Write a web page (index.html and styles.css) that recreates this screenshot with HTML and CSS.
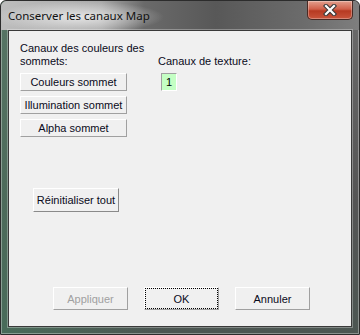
FILE: index.html
```html
<!DOCTYPE html>
<html lang="fr">
<head>
    <meta charset="UTF-8">
    <title>Conserver les canaux Map</title>
    <link rel="stylesheet" href="styles.css">
</head>
<body>
    <div class="window">
        <div class="titlebar">
            <span class="title">Conserver les canaux Map</span>
            <div class="close">
                <svg width="14" height="12" viewBox="0 0 14 12">
                    <path d="M3 2 L11 10 M11 2 L3 10" stroke="#3a3a3a" stroke-width="4.4" stroke-linecap="square"/>
                    <path d="M3 2 L11 10 M11 2 L3 10" stroke="#fff" stroke-width="2.2" stroke-linecap="square"/>
                </svg>
            </div>
        </div>

        <div class="client">
            <div class="top">
                <div class="vertex-col">
                    <p class="label">Canaux des couleurs des<br>sommets:</p>
                    <button class="btn wide">Couleurs sommet</button>
                    <button class="btn wide">Illumination sommet</button>
                    <button class="btn wide">Alpha sommet</button>
                </div>
                <div class="texture-col">
                    <p class="label">Canaux de texture:</p>
                    <div class="channel">1</div>
                </div>
            </div>

            <button class="btn reset">Réinitialiser tout</button>

            <!-- Dialog buttons -->
            <div class="footer">
                <button class="btn action" disabled>Appliquer</button>
                <button class="btn action focused">OK</button>
                <button class="btn action">Annuler</button>
            </div>
        </div>
    </div>
</body>
</html>
```

FILE: styles.css
```css
body {
    margin: 0;
    padding: 0;
    background-color: #fff;
}

.window {
    width: 360px;
    height: 335px;
    box-sizing: border-box;
    display: flex;
    flex-direction: column;
    padding: 0 7px 7px 7px;
    border: 1px solid #2c2c2c;
    border-radius: 6px 6px 0 0;
    box-shadow: inset 0 0 0 1px rgba(255, 255, 255, 0.35);
    background:
        linear-gradient(to right, rgba(70, 125, 95, 0.55), rgba(70, 125, 95, 0) 45%),
        linear-gradient(to bottom, #6c6c6c, #555 60%, #4c5652);
}

.titlebar {
    height: 29px;
    margin: 0 -7px;
    padding: 0 6px 0 7px;
    display: flex;
    align-items: flex-start;
    border-radius: 6px 6px 0 0;
    background:
        radial-gradient(ellipse 85px 16px at 78px 16px, rgba(235, 235, 235, 0.9), rgba(235, 235, 235, 0) 100%),
        linear-gradient(to right, #bdbdbd 0%, #a9a9a9 28%, #6a6a6a 40%, #585858 60%, #6c6c6c 85%, #7e7e7e 100%);
}

.title {
    font-family: "Noto Sans", sans-serif;
    font-size: 11.5px;
    color: #111;
    line-height: 16px;
    margin-top: 7px;
}

.close {
    margin-left: auto;
    width: 46px;
    height: 19px;
    box-sizing: border-box;
    display: flex;
    align-items: center;
    justify-content: center;
    border: 1px solid #4a2a24;
    border-top: none;
    border-radius: 0 0 5px 5px;
    background: linear-gradient(to bottom, #e3a08e 0%, #d0604a 45%, #b73a22 55%, #c9553c 100%);
    box-shadow: inset 0 0 0 1px rgba(255, 255, 255, 0.3);
}

.client {
    flex: 1;
    display: flex;
    flex-direction: column;
    background-color: #f0f0f0;
    border: 1px solid #3a3a3a;
    box-shadow: 0 0 0 1px rgba(255, 255, 255, 0.3);
    padding: 11px 0 16px 11px;
    font-family: "Liberation Sans", Arial, sans-serif;
    font-size: 11px;
    color: #000;
}

.top {
    display: flex;
}

.vertex-col {
    display: flex;
    flex-direction: column;
    gap: 5px;
    width: 138px;
}

.label {
    margin: 0;
    line-height: 13px;
    color: #0a0a1a;
}

.texture-col {
    padding-top: 13px;
    display: flex;
    flex-direction: column;
    gap: 5px;
}

.channel {
    width: 16px;
    height: 18px;
    box-sizing: border-box;
    margin-left: 3px;
    background-color: #c4ffc4;
    border: 1px solid;
    border-color: #a0a0a0 #fff #fff #a0a0a0;
    text-align: center;
    line-height: 16px;
}

.btn {
    font-family: "Liberation Sans", Arial, sans-serif;
    font-size: 11px;
    color: #0a0a1a;
    background-color: #f0f0f0;
    border: 1px solid;
    border-color: #fff #a0a0a0 #a0a0a0 #fff;
    padding: 0;
    margin: 0;
    box-sizing: border-box;
}

.wide {
    width: 107px;
    height: 18px;
}

.reset {
    width: 86px;
    height: 24px;
    margin: 51px 0 0 13px;
    align-self: flex-start;
    border-right-color: #8a8a8a;
    border-bottom-color: #8a8a8a;
}

.footer {
    margin-top: auto;
    display: flex;
    gap: 16px;
    padding-left: 33px;
}

.action {
    width: 75px;
    height: 23px;
}

.action:disabled {
    color: #a0a0a0;
}

.focused {
    outline: 1px dotted #000;
    outline-offset: -2px;
}
```
